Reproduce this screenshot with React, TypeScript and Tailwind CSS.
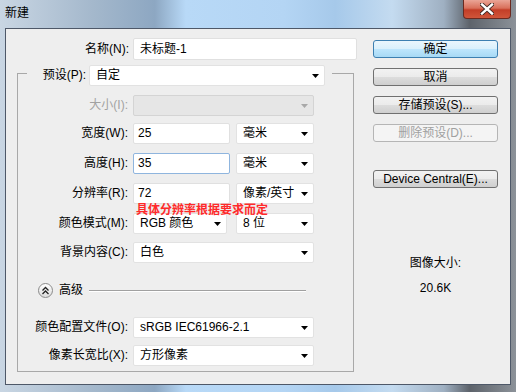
import React from "react";

const Arrow = ({ disabled }: { disabled?: boolean }) => (
  <svg width="7" height="4" viewBox="0 0 7 4" className="mr-[5px] shrink-0">
    <path d="M0 0h7L3.5 4z" fill={disabled ? "#a8a8a8" : "#000"} />
  </svg>
);

const Select = ({
  className,
  value,
  disabled,
}: {
  className: string;
  value?: string;
  disabled?: boolean;
}) => (
  <div
    className={`flex items-center h-[21px] rounded-[2px] border pl-[6px] ${
      disabled ? "bg-[#e6e6e6] border-[#d4d4d4]" : "bg-white border-[#e2e2e2]"
    } ${className}`}
  >
    <span className="flex-1 leading-[19px]">{value}</span>
    <Arrow disabled={disabled} />
  </div>
);

const Input = ({
  className,
  value,
  focused,
}: {
  className: string;
  value: string;
  focused?: boolean;
}) => (
  <div
    className={`flex items-center h-[21px] bg-white border rounded-[2px] pl-[4px] ${
      focused ? "border-[#8fb5de]" : "border-[#e0e0e0]"
    } ${className}`}
  >
    <span className="leading-[19px]">{value}</span>
  </div>
);

const Label = ({
  text,
  disabled,
}: {
  text: string;
  disabled?: boolean;
}) => (
  <div
    className={`w-[111px] text-right pr-px leading-[21px] ${
      disabled ? "text-[#a2a2a2]" : "text-black"
    }`}
  >
    {text}
  </div>
);

const Button = ({
  text,
  primary,
  disabled,
  className,
}: {
  text: string;
  primary?: boolean;
  disabled?: boolean;
  className: string;
}) => (
  <div
    className={`w-[125px] h-[18px] rounded-[3px] border flex items-center justify-center leading-[16px] ${
      primary
        ? "border-[#3c7fb1] bg-[linear-gradient(#eaf6fd_0%,#d9f0fc_50%,#bee6fd_50%,#a7d9f5_100%)] text-black"
        : disabled
        ? "border-[#b5b5b5] bg-[#f4f4f4] text-[#a0a0a0]"
        : "border-[#707070] bg-[linear-gradient(#f2f2f2_0%,#ebebeb_50%,#dddddd_50%,#cfcfcf_100%)] text-black"
    } ${className}`}
  >
    {text}
  </div>
);

export default function App() {
  return (
    <div className="w-[516px] h-[392px] flex flex-col text-[12px] font-['Liberation_Sans','Noto_Sans_CJK_SC',sans-serif] bg-[linear-gradient(90deg,#c9d6e3_0%,#a4b8cc_18%,#8da7c2_30%,#b8d9f7_36%,#b4d5f4_55%,#a6c9ea_65%,#c4dbf0_76%,#9fb0c2_86%,#5d636b_91%,#8c9299_100%)]">
      {/* title bar */}
      <div className="h-[28px] flex items-start shrink-0">
        <div className="pl-[5px] pt-[6px] leading-[14px] text-black">新建</div>
        <div className="ml-auto mr-[5px] w-[48px] h-[19px] rounded-b-[4px] border border-t-0 border-[#6b2a20] bg-[linear-gradient(#eaa596_0%,#d9705b_45%,#c33e27_55%,#d0553a_100%)] flex items-center justify-center">
          <svg width="14" height="12" viewBox="0 0 14 12">
            <path d="M2 1.5L12 10.5M12 1.5L2 10.5" stroke="#3b2420" strokeWidth="4.2" strokeLinecap="square" />
            <path d="M2 1.5L12 10.5M12 1.5L2 10.5" stroke="#fff" strokeWidth="2.4" strokeLinecap="square" />
          </svg>
        </div>
      </div>

      {/* content */}
      <div className="mx-[5px] w-[506px] h-[357px] border border-[#4e5868] bg-[#eeeeee] flex">
        {/* left column */}
        <div className="flex flex-col w-[352px]">
          <div className="mt-[9px] flex">
            <div className="w-[123px] text-right leading-[22px]">名称(N):</div>
            <div className="ml-[4px] w-[224px] h-[22px] bg-white border border-[#e0e0e0] rounded-[2px] pl-[6px] leading-[20px]">
              未标题-1
            </div>
          </div>

          <div className="relative mt-[13px] ml-[11px] w-[337px] h-[299px] border-x border-b border-[#a8a8a8] flex flex-col">
            <div className="-mt-[8px] flex items-start h-[21px]">
              <div className="w-[9px] h-px bg-[#a8a8a8] mt-[8px]" />
              <div className="w-[59px] text-right leading-[21px]">预设(P):</div>
              <Select className="ml-[3px] w-[236px]" value="自定" />
              <div className="ml-[7px] flex-1 h-px bg-[#a8a8a8] mt-[8px]" />
            </div>

            <div className="mt-[9px] flex">
              <Label text="大小(I):" disabled />
              <Select className="ml-[4px] w-[181px]" disabled />
            </div>

            <div className="mt-[7px] flex">
              <Label text="宽度(W):" />
              <Input className="ml-[4px] w-[97px]" value="25" />
              <Select className="ml-[6px] w-[78px]" value="毫米" />
            </div>

            <div className="mt-[9px] flex">
              <Label text="高度(H):" />
              <Input className="ml-[4px] w-[97px]" value="35" focused />
              <Select className="ml-[6px] w-[78px]" value="毫米" />
            </div>

            <div className="mt-[9px] flex">
              <Label text="分辨率(R):" />
              <Input className="ml-[4px] w-[97px]" value="72" />
              <Select className="ml-[6px] w-[78px]" value="像素/英寸" />
            </div>

            <div className="mt-[9px] flex">
              <Label text="颜色模式(M):" />
              <Select className="ml-[4px] w-[94px]" value="RGB 颜色" />
              <Select className="ml-[9px] w-[78px]" value="8 位" />
            </div>

            <div className="mt-[8px] flex">
              <Label text="背景内容(C):" />
              <Select className="ml-[4px] w-[181px]" value="白色" />
            </div>

            <div className="mt-[20px] flex items-center h-[15px]">
              <div className="ml-[20px] w-[15px] h-[15px] rounded-full border border-[#8a8a8a] bg-[linear-gradient(#ffffff,#dcdcdc)] flex items-center justify-center">
                <svg width="9" height="9" viewBox="0 0 9 9">
                  <path d="M1.5 4.5L4.5 1.5L7.5 4.5M1.5 8L4.5 5L7.5 8" fill="none" stroke="#222" strokeWidth="1.3" />
                </svg>
              </div>
              <div className="ml-[6px] leading-[15px]">高级</div>
              <div className="ml-[6px] w-[217px] h-[2px] border-t border-[#a0a0a0] border-b-white border-b" />
            </div>

            <div className="mt-[19px] flex">
              <Label text="颜色配置文件(O):" />
              <Select className="ml-[4px] w-[181px]" value="sRGB IEC61966-2.1" />
            </div>

            <div className="mt-[7px] flex">
              <Label text="像素长宽比(X):" />
              <Select className="ml-[4px] w-[181px]" value="方形像素" />
            </div>

            <div className="absolute left-[118px] top-[131px] leading-[12px] font-bold text-[#ff2a2a]">
              具体分辨率根据要求而定
            </div>
          </div>
        </div>

        {/* right column */}
        <div className="ml-[15px] flex flex-col">
          <Button className="mt-[11px]" text="确定" primary />
          <Button className="mt-[10px]" text="取消" />
          <Button className="mt-[10px]" text="存储预设(S)..." />
          <Button className="mt-[10px]" text="删除预设(D)..." disabled />
          <Button className="mt-[28px]" text="Device Central(E)..." />
          <div className="mt-[68px] w-[125px] text-center leading-[14px]">图像大小:</div>
          <div className="mt-[11px] w-[125px] text-center leading-[14px]">20.6K</div>
        </div>
      </div>
    </div>
  );
}
